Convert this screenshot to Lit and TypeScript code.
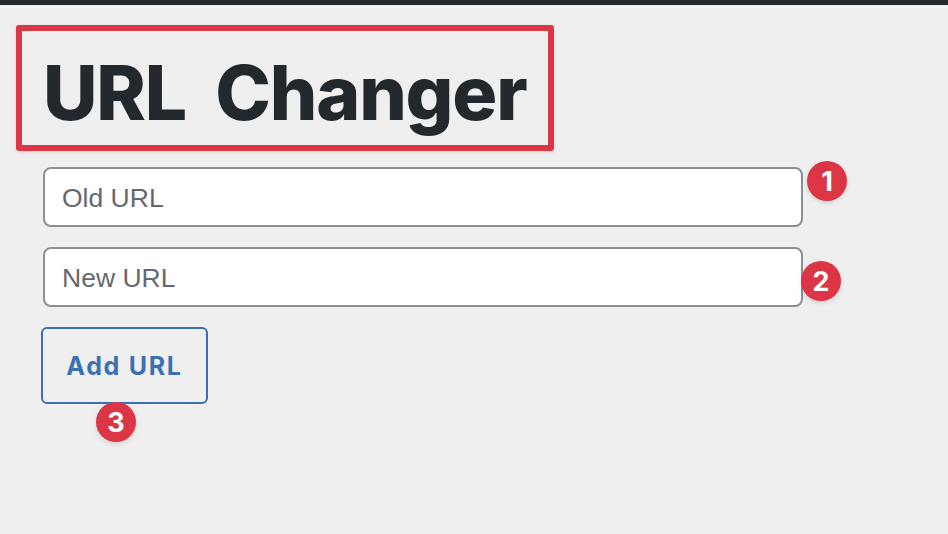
import { LitElement, html, css } from "lit";
import { customElement } from "lit/decorators.js";

@customElement("app-root")
export class AppRoot extends LitElement {
  static styles = css`
    :host {
      display: block;
      position: relative;
      width: 948px;
      height: 534px;
      overflow: hidden;
      background: #efefef;
      font-family: Inter, "Liberation Sans", sans-serif;
      color: #23282d;
    }
    .topbar { height: 5px; background: #23282d; }
    .content {
      display: flex;
      flex-direction: column;
      align-items: flex-start;
      padding: 20px 0 0 16px;
    }
    .title {
      box-sizing: border-box;
      width: 538px;
      height: 126px;
      margin: 0 0 16px;
      padding: 9px 0 0 21px;
      display: flex;
      align-items: center;
      border: 6px solid #dc3545;
      border-radius: 3px;
      box-shadow: 0 1px 4px rgba(0, 0, 0, 0.12);
      font-size: 75px;
      font-weight: 800;
      letter-spacing: -1.2px;
      word-spacing: 14px;
      line-height: 1;
      white-space: pre;
    }
    .form {
      display: flex;
      flex-direction: column;
      align-items: flex-start;
      gap: 20px;
      padding-left: 27px;
    }
    .field { position: relative; }
    input {
      display: block;
      box-sizing: border-box;
      width: 760px;
      height: 60px;
      padding: 2px 17px 0;
      border: 2px solid #8c8f94;
      border-radius: 8px;
      background: #fff;
      font: 400 26.5px "Liberation Sans", Arial, sans-serif;
      outline: none;
    }
    input::placeholder { color: #646970; opacity: 1; }
    .button {
      position: relative;
      box-sizing: border-box;
      width: 167px;
      height: 77px;
      margin-left: -2px;
      border: 2px solid #3c70b2;
      border-radius: 6px;
      background: transparent;
      color: #3c70b2;
      font: 700 25px Inter, "Liberation Sans", sans-serif;
      letter-spacing: 1.7px;
      padding: 0;
    }
    .badge {
      position: absolute;
      width: 40px;
      height: 40px;
      border-radius: 50%;
      display: flex;
      align-items: center;
      justify-content: center;
      background: #dc3545;
      color: #fff;
      font: 700 27px Inter, "Liberation Sans", sans-serif;
      letter-spacing: 0;
      box-shadow: 0 2px 5px rgba(0, 0, 0, 0.12);
    }
    .b1 { left: 764px; top: -6px; }
    .b2 { left: 758px; top: 14px; }
    .b3 { left: 53px; top: 73px; }
  `;

  render() {
    return html`
      <div class="topbar"></div>
      <div class="content">
        <h1 class="title">URL Changer</h1>
        <div class="form">
          <div class="field">
            <input type="text" placeholder="Old URL" />
            <span class="badge b1">1</span>
          </div>
          <div class="field">
            <input type="text" placeholder="New URL" />
            <span class="badge b2">2</span>
          </div>
          <button class="button">Add URL<span class="badge b3">3</span></button>
        </div>
      </div>
    `;
  }
}
